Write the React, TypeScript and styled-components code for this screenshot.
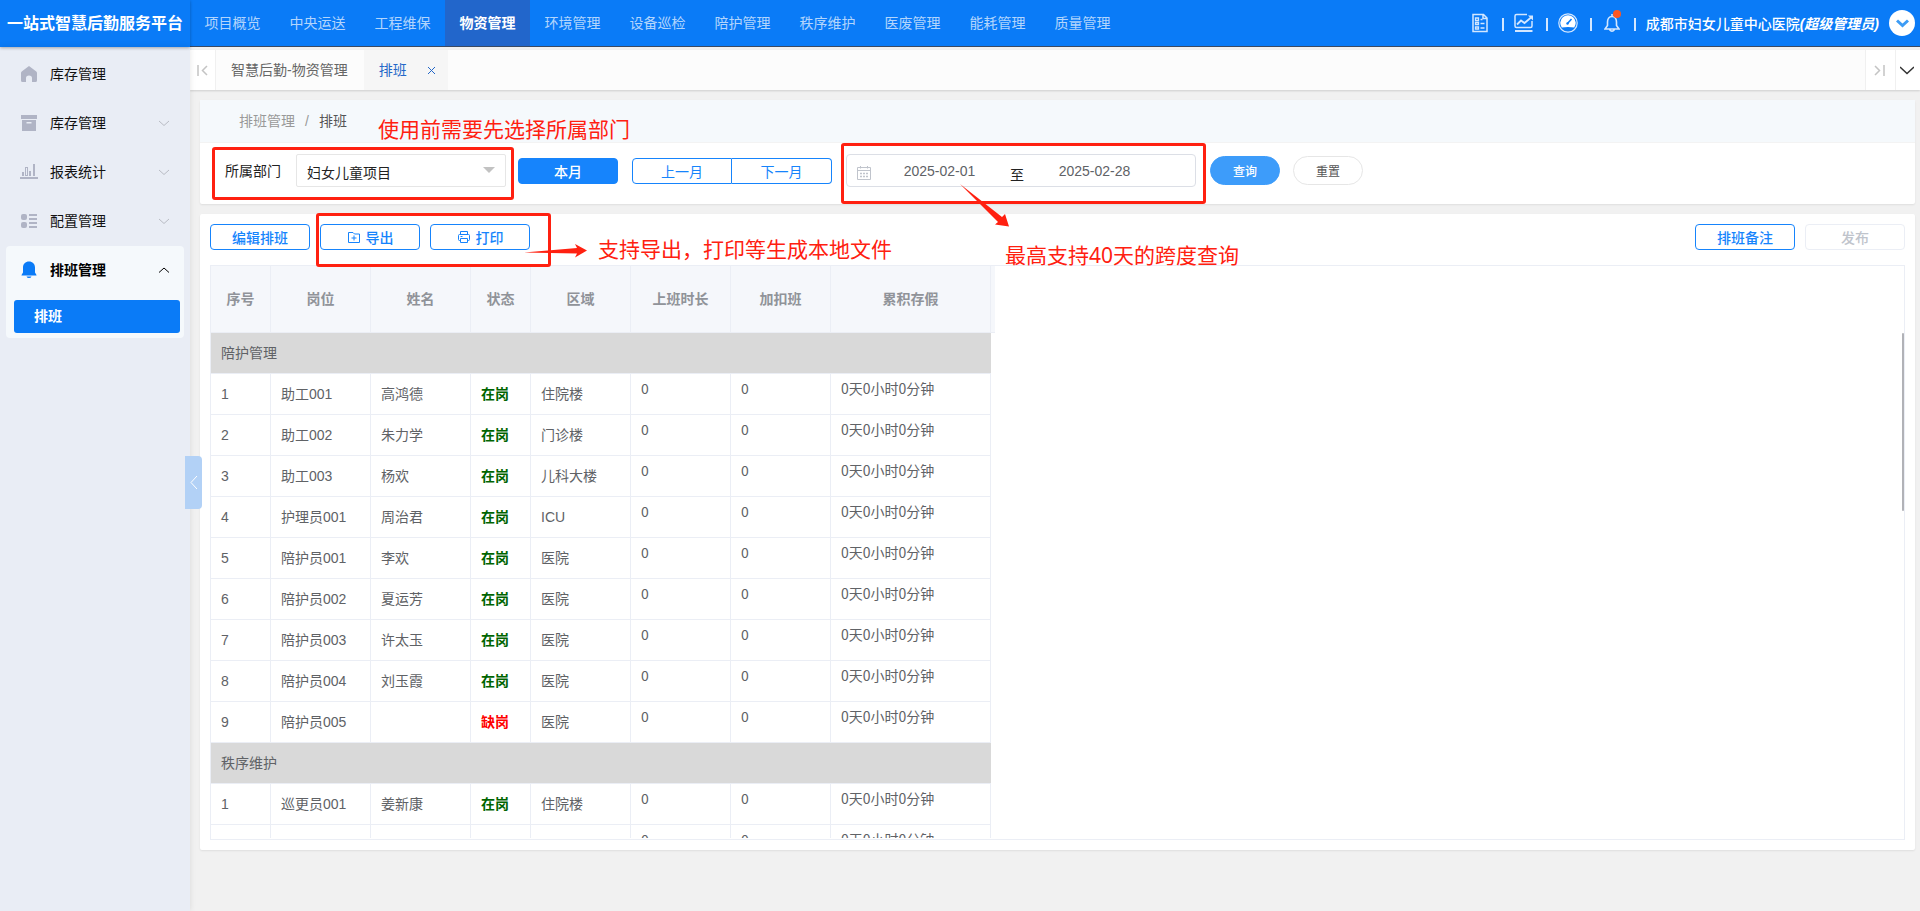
import React from "react";
import styled, { createGlobalStyle, css } from "styled-components";

const sans = `"Liberation Sans", "Noto Sans CJK SC", sans-serif`;
const cjk = `"Noto Sans CJK SC", sans-serif`;

const Global = createGlobalStyle`
  * { box-sizing: border-box; }
  body { margin: 0; background: #f1f1f1; font: 14px/20px ${sans}; color: #333; }
  button, input, select { font: inherit; margin: 0; }
  a { color: inherit; text-decoration: none; }
  svg { display: block; flex: none; }
`;

const Page = styled.div`
  position: relative;
  min-height: 100vh;
  display: flex;
  flex-direction: column;
  overflow: hidden;
`;

/* ---------- header ---------- */
const Header = styled.header`
  display: flex;
  height: 47px;
  background: #0a7bf7;
  color: #fff;
`;
const Brand = styled.h1`
  width: 190px;
  margin: 0;
  flex: none;
  text-align: center;
  font: 700 16px/44px ${cjk};
  box-shadow: 0 1px 3px rgba(0, 0, 0, 0.3);
  z-index: 1;
`;
const HeaderBar = styled.div`
  display: flex;
  flex: 1;
  justify-content: space-between;
  border-bottom: 1px solid #3a4a63;
`;
const Nav = styled.nav`
  display: flex;
`;
const NavLink = styled.a<{ $active?: boolean }>`
  width: 85px;
  text-align: center;
  line-height: 46px;
  color: rgba(255, 255, 255, 0.7);
  ${(p) =>
    p.$active &&
    css`
      color: #fff;
      font-weight: 700;
      background: #2266cb;
    `}
`;
const Tools = styled.div`
  display: flex;
  align-items: center;
  padding-right: 5px;
`;
const ToolButton = styled.button`
  position: relative;
  display: flex;
  align-items: center;
  justify-content: center;
  width: 42px;
  height: 46px;
  padding: 0 2px 0 0;
  border: 0;
  background: none;
  color: #d3e7ff;
`;
const Divider = styled.span`
  width: 2px;
  height: 13px;
  margin-top: 3px;
  background: #d3e7ff;
`;
const Dot = styled.span`
  position: absolute;
  top: 10px;
  right: 13px;
  width: 8px;
  height: 8px;
  border-radius: 50%;
  background: #ff5722;
`;
const Account = styled.span`
  padding: 2px 10px 0;
  font-weight: 500;
  em {
    font-weight: 700;
  }
`;
const Round = styled.button`
  display: flex;
  align-items: center;
  justify-content: center;
  width: 26px;
  height: 26px;
  padding: 0;
  border: 0;
  border-radius: 50%;
  background: #fff;
  color: #3d9cf5;
`;

/* ---------- sidebar ---------- */
const Body = styled.div`
  display: flex;
  flex: 1;
`;
const Sidebar = styled.aside`
  position: relative;
  width: 190px;
  flex: none;
  padding: 3px 6px;
  background: #e9edf5;
  box-shadow: 0 0 6px rgba(0, 0, 0, 0.1);
`;
const MenuItem = styled.a<{ $open?: boolean }>`
  display: flex;
  align-items: center;
  gap: 12px;
  height: 49px;
  padding: 0 14px 2px;
  color: ${(p) => (p.$open ? "#000" : "#111")};
  font-weight: ${(p) => (p.$open ? 700 : 400)};
  span {
    flex: 1;
  }
`;
const Group = styled.div`
  padding-bottom: 5px;
  border-radius: 4px;
  background: #f5f9fc;
`;
const SubItem = styled.a`
  display: block;
  margin: 5px 4px 0 8px;
  padding-left: 20px;
  border-radius: 3px;
  background: #0a7bf7;
  color: #fff;
  font-weight: 700;
  line-height: 33px;
`;
const Handle = styled.button`
  position: absolute;
  top: 409px;
  left: 185px;
  width: 17px;
  height: 53px;
  padding: 0;
  border: 0;
  border-radius: 0 4px 4px 0;
  background: #b2d1f6;
  color: #fff;
  display: flex;
  align-items: center;
  justify-content: center;
  z-index: 2;
`;

/* ---------- main ---------- */
const Main = styled.main`
  flex: 1;
  min-width: 0;
  padding-top: 3px;
`;
const TabBar = styled.div`
  display: flex;
  height: 40px;
  background: #fcfcfc;
  box-shadow: 0 1px 2px rgba(0, 0, 0, 0.15);
`;
const TabArrow = styled.button<{ $w: number; $dark?: boolean; $left?: boolean }>`
  display: flex;
  align-items: center;
  justify-content: center;
  width: ${(p) => p.$w}px;
  padding: 0 ${(p) => (p.$left ? 0 : 2)}px 0 0;
  border: solid #f0f0f0;
  border-width: ${(p) => (p.$left ? "0 1px 0 0" : "0 0 0 1px")};
  background: #fff;
  color: ${(p) => (p.$dark ? "#333" : "#c4c4c4")};
`;
const Tabs = styled.div`
  display: flex;
  flex: 1;
`;
const Tab = styled.a<{ $active?: boolean }>`
  display: flex;
  align-items: center;
  gap: 20px;
  padding: 0 ${(p) => (p.$active ? 12 : 16)}px 0 15px;
  color: ${(p) => (p.$active ? "#2468c8" : "#666")};
  background: ${(p) => (p.$active ? "#f6f6f6" : "transparent")};
`;
const Content = styled.div`
  display: flex;
  flex-direction: column;
  gap: 10px;
  padding: 10px 5px 10px 10px;
`;
const Card = styled.section`
  border-radius: 2px;
  background: #fff;
  box-shadow: 0 1px 2px rgba(0, 0, 0, 0.08);
`;
const Crumbs = styled.nav`
  display: flex;
  gap: 10px;
  height: 43px;
  padding: 0 39px;
  border-bottom: 1px solid #f3f3f3;
  background: #f5f9fc;
  line-height: 42px;
  color: #999;
  b {
    font-weight: 400;
    color: #555;
  }
`;
const Filters = styled.form`
  display: flex;
  align-items: center;
  height: 61px;
  padding: 0 25px 6px;
`;
const Label = styled.label`
  width: 71px;
  color: #222;
`;
const SelectBox = styled.div`
  position: relative;
  width: 210px;
  margin-right: 12px;
`;
const Select = styled.select`
  appearance: none;
  display: block;
  width: 100%;
  height: 33px;
  padding: 5px 30px 0 10px;
  border: 1px solid #e6e6e6;
  border-radius: 2px;
  background: #fff;
  color: #222;
`;
const Caret = styled.span`
  position: absolute;
  top: 13px;
  right: 11px;
  border: solid transparent;
  border-width: 6px 6px 0;
  border-top-color: #c2c2c2;
`;
const Button = styled.button<{ $kind?: "primary" | "muted" }>`
  display: flex;
  align-items: center;
  justify-content: center;
  gap: 5px;
  width: 100px;
  height: 26px;
  padding: 0;
  border: 1px solid #1684fc;
  border-radius: 4px;
  background: #fff;
  color: #1684fc;
  font-weight: 500;
  font-family: ${cjk};
  ${(p) =>
    p.$kind === "primary" &&
    css`
      background: #1684fc;
      color: #fff;
    `}
  ${(p) =>
    p.$kind === "muted" &&
    css`
      border-color: #ebeef5;
      color: #c0c4cc;
    `}
`;
const Joined = styled.div`
  display: flex;
  margin: 0 14px;
  ${Button} {
    font-weight: 400;
  }
  ${Button}:first-child {
    border-radius: 4px 0 0 4px;
  }
  ${Button}:last-child {
    border-left: 0;
    border-radius: 0 4px 4px 0;
  }
`;
const Range = styled.div`
  display: flex;
  align-items: center;
  width: 350px;
  height: 33px;
  margin-right: 14px;
  padding: 0 10px;
  border: 1px solid #dcdfe6;
  border-radius: 4px;
  svg {
    margin-top: 5px;
  }
`;
const DateInput = styled.input`
  width: 137px;
  padding: 0;
  border: 0;
  background: none;
  text-align: center;
  color: #606266;
`;
const To = styled.span`
  width: 18px;
  padding-top: 8px;
  text-align: center;
  color: #222;
`;
const Pill = styled.button<{ $plain?: boolean }>`
  width: 70px;
  height: 29px;
  margin-right: 13px;
  padding: 0;
  border: 1px solid ${(p) => (p.$plain ? "#e6e6e6" : "#3d9cfa")};
  border-radius: 15px;
  background: ${(p) => (p.$plain ? "#fff" : "#3d9cfa")};
  color: ${(p) => (p.$plain ? "#555" : "#fff")};
  font-family: ${cjk};
  font-size: 12px;
  font-weight: ${(p) => (p.$plain ? 400 : 500)};
`;
const Panel = styled(Card)`
  padding: 10px;
`;
const Toolbar = styled.div`
  display: flex;
  gap: 10px;
  margin-bottom: 15px;
`;
const Spacer = styled.span`
  flex: 1;
`;
const TableWrap = styled.div`
  position: relative;
  height: calc(100vh - 336px);
  padding-bottom: 1px;
  border: 1px solid #ebeef5;
`;
const Viewport = styled.div`
  height: 100%;
  overflow: hidden;
`;
const Thumb = styled.span`
  position: absolute;
  top: 67px;
  right: 0;
  width: 2px;
  height: 178px;
  border-radius: 1px;
  background: #b1b2b7;
`;
const Table = styled.table`
  width: 784px;
  table-layout: fixed;
  border-spacing: 0;
  color: #606266;
`;
const Th = styled.th`
  height: 67px;
  padding: 0;
  border: solid #ebeef5;
  border-width: 0 1px 1px 0;
  background: #f5f7fb;
  color: #909399;
  font-weight: 700;
  &:last-child {
    border-right: 0;
  }
`;
const Td = styled.td<{ $top?: boolean }>`
  height: 41px;
  padding: ${(p) => (p.$top ? "4px 10px 0" : "0 10px")};
  border: solid #ebeef5;
  border-width: 0 1px 1px 0;
  vertical-align: ${(p) => (p.$top ? "top" : "middle")};
  ${(p) => p.$top && `font-family: ${cjk};`}
`;
const GroupCell = styled.td`
  height: 41px;
  padding: 0 10px;
  border-bottom: 1px solid #ebeef5;
  background: #d9d9d9;
`;
const Status = styled.strong<{ $absent?: boolean }>`
  color: ${(p) => (p.$absent ? "#f00" : "#006400")};
`;

/* ---------- red guide marks over the page ---------- */
const Mark = styled.span<{ $x: number; $y: number; $w: number; $h: number }>`
  position: absolute;
  left: ${(p) => p.$x}px;
  top: ${(p) => p.$y}px;
  width: ${(p) => p.$w}px;
  height: ${(p) => p.$h}px;
  border: 3px solid #ff2010;
  border-radius: 3px;
  pointer-events: none;
`;
const Note = styled.p<{ $x: number; $y: number }>`
  position: absolute;
  left: ${(p) => p.$x}px;
  top: ${(p) => p.$y}px;
  margin: 0;
  font-family: "Noto Sans", ${cjk};
  font-size: 21px;
  line-height: 30px;
  white-space: nowrap;
  color: #ff2010;
`;
const Arrow = styled.svg<{ $x: number; $y: number }>`
  position: absolute;
  left: ${(p) => p.$x}px;
  top: ${(p) => p.$y}px;
  fill: #ff2010;
  pointer-events: none;
`;

const Chevron = ({ d, w = 12, h = 8, sw = 1 }: { d: string; w?: number; h?: number; sw?: number }) => (
  <svg width={w} height={h} viewBox={`0 0 ${w} ${h}`} fill="none" stroke="currentColor" strokeWidth={sw}>
    <path d={d} />
  </svg>
);

const HomeIcon = () => (
  <svg width="18" height="18" viewBox="0 0 18 18" fill="#b0b4c5">
    <path d="M9 1 16.300 6.500Q17 7 17 8V15.500Q17 17 15.500 17H12V13Q12 10.500 9 10.500T6 13V17H2.500Q1 17 1 15.500V8Q1 7 1.700 6.500Z" />
  </svg>
);
const BoxIcon = () => (
  <svg width="18" height="18" viewBox="0 0 18 18" fill="#b0b4c5">
    <rect x="1" y="1" width="16" height="4" />
    <path d="M2 6H16V17H2ZM6.500 8V9.500H11.500V8Z" fillRule="evenodd" />
  </svg>
);
const ChartIcon = () => (
  <svg width="18" height="18" viewBox="0 0 18 18" fill="#b0b4c5">
    <path d="M0 14H18V16H0ZM2 9H4V13H2ZM9 8H11V13H9ZM13 1H15V13H13Z" />
    <rect x="5.500" y="4.500" width="2" height="8" fill="none" stroke="#b0b4c5" />
  </svg>
);
const ListIcon = () => (
  <svg width="18" height="18" viewBox="0 0 18 18" fill="#b0b4c5">
    <rect x="1" y="2" width="6" height="6" rx="2" />
    <rect x="1" y="10" width="6" height="6" rx="2" />
    <path d="M9 2H17V4H9ZM9 6H17V8H9ZM9 10H17V12H9ZM9 14H17V16H9Z" />
  </svg>
);
const BellFilled = () => (
  <svg width="18" height="18" viewBox="0 0 18 18" fill="#0a7bf7">
    <path d="M9 0.500C12.500 .5 15 3 15 6.500V11.500L16.500 14V14.500H1.500V14L3 11.500V6.500C3 3 5.500 .5 9 .5ZM6.500 15.500H11.500Q11 17 9 17T6.500 15.500Z" />
  </svg>
);

const menu = [
  { text: "库存管理", icon: <HomeIcon />, leaf: true },
  { text: "库存管理", icon: <BoxIcon /> },
  { text: "报表统计", icon: <ChartIcon /> },
  { text: "配置管理", icon: <ListIcon /> },
];

const navItems = [
  "项目概览", "中央运送", "工程维保", "物资管理", "环境管理", "设备巡检",
  "陪护管理", "秩序维护", "医废管理", "能耗管理", "质量管理",
];

const columns: [string, number][] = [
  ["序号", 60], ["岗位", 100], ["姓名", 100], ["状态", 60],
  ["区域", 100], ["上班时长", 100], ["加扣班", 100], ["累积存假", 160],
];

type Person = { post: string; name: string; area: string; absent?: boolean };
const groups: { title: string; people: Person[] }[] = [
  {
    title: "陪护管理",
    people: [
      { post: "助工001", name: "高鸿德", area: "住院楼" },
      { post: "助工002", name: "朱力学", area: "门诊楼" },
      { post: "助工003", name: "杨欢", area: "儿科大楼" },
      { post: "护理员001", name: "周治君", area: "ICU" },
      { post: "陪护员001", name: "李欢", area: "医院" },
      { post: "陪护员002", name: "夏运芳", area: "医院" },
      { post: "陪护员003", name: "许太玉", area: "医院" },
      { post: "陪护员004", name: "刘玉霞", area: "医院" },
      { post: "陪护员005", name: "", area: "医院", absent: true },
    ],
  },
  {
    title: "秩序维护",
    people: [{ post: "巡更员001", name: "姜新康", area: "住院楼" }],
  },
];

export default function App() {
  return (
    <Page>
      <Global />
      <Header>
        <Brand>一站式智慧后勤服务平台</Brand>
        <HeaderBar>
          <Nav>
            {navItems.map((t) => (
              <NavLink key={t} href="#" $active={t === "物资管理"}>{t}</NavLink>
            ))}
          </Nav>
          <Tools>
            <ToolButton aria-label="文档">
              <svg width="16" height="20" viewBox="0 0 16 20" fill="none" stroke="currentColor" strokeWidth="1.500">
                <path d="M1 1.500H11.500L15 5V18.500H1ZM11 1.500V5.500H15" />
                <path d="M3.500 5H6.500V7.500H3.500ZM3.500 9.500H6.500V11.500H3.500ZM3.500 14H6.500V16H3.500ZM8.500 6.500H10.500M8.500 10.500H12.500M8.500 15H12.500" strokeWidth="1.300" />
              </svg>
            </ToolButton>
            <Divider />
            <ToolButton aria-label="趋势">
              <svg width="20" height="20" viewBox="0 0 20 20" fill="none" stroke="currentColor" strokeWidth="1.500">
                <path d="M13 1.500H2.500Q1 1.500 1 3V13Q1 14.500 2.500 14.500H16.500Q18 14.500 18 13V8" />
                <path d="M3 11.500 7 7.500 10.500 10 17 4.500" strokeWidth="1.800" />
                <path d="M14 2.500H19V7.500Z" fill="currentColor" stroke="none" />
                <path d="M1 18H18.500" strokeWidth="2" />
              </svg>
            </ToolButton>
            <Divider />
            <ToolButton aria-label="仪表盘">
              <svg width="20" height="20" viewBox="0 0 20 20">
                <circle cx="10" cy="10" r="9.200" fill="none" stroke="currentColor" strokeWidth="1.200" />
                <path d="M3.800 14.500A7.700 7.700 0 1 1 16.200 14.500Q10 13.500 3.800 14.500Z" fill="#fff" />
                <path d="M9.500 10.500 13.500 6" stroke="#0a7bf7" strokeWidth="1.500" />
                <circle cx="9.500" cy="10.500" r="1.200" fill="#0a7bf7" />
              </svg>
            </ToolButton>
            <Divider />
            <ToolButton aria-label="通知">
              <svg width="16" height="20" viewBox="0 0 16 20" fill="none" stroke="currentColor" strokeWidth="1.600">
                <path d="M8 3.500C5 3.500 3.500 6 3.500 9V12.500L1 16H15L12.500 12.500V9C12.500 6 11 3.500 8 3.500ZM8 1V3.500M5.500 16.500Q8 20 10.500 16.500" />
              </svg>
              <Dot />
            </ToolButton>
            <Divider />
            <Account>
              成都市妇女儿童中心医院<em>(超级管理员)</em>
            </Account>
            <Round aria-label="账户菜单">
              <Chevron d="M1 1.500 6.500 6.500 12 1.500" w={13} h={9} sw={3} />
            </Round>
          </Tools>
        </HeaderBar>
      </Header>

      <Body>
        <Sidebar>
          {menu.map((m, i) => (
            <MenuItem key={i} href="#">
              {m.icon}
              <span>{m.text}</span>
              {!m.leaf && (
                <svg width="12" height="8" viewBox="0 0 12 8" fill="none" stroke="#b9bcc4">
                  <path d="M1 2 6 6.500 11 2" />
                </svg>
              )}
            </MenuItem>
          ))}
          <Group>
            <MenuItem href="#" $open>
              <BellFilled />
              <span>排班管理</span>
              <Chevron d="M1 6.500 6 2 11 6.500" />
            </MenuItem>
            <SubItem href="#">排班</SubItem>
          </Group>
          <Handle aria-label="收起菜单">
            <Chevron d="M8 1 2 7.500 8 14" w={10} h={15} />
          </Handle>
        </Sidebar>

        <Main>
          <TabBar>
            <TabArrow $w={26} $left aria-label="第一页">
              <Chevron d="M1 0V11M10 1 5.500 5.500 10 10" w={11} h={11} sw={1.5} />
            </TabArrow>
            <Tabs>
              <Tab href="#">智慧后勤-物资管理</Tab>
              <Tab href="#" $active>
                排班
                <Chevron d="M1 1 8 8M8 1 1 8" w={9} h={9} />
              </Tab>
            </Tabs>
            <TabArrow $w={30} aria-label="最后一页">
              <Chevron d="M10 0V11M1 1 5.500 5.500 1 10" w={11} h={11} sw={1.5} />
            </TabArrow>
            <TabArrow $w={25} $dark aria-label="更多">
              <Chevron d="M0 1 7 7.500 14 1" w={14} h={9} sw={1.5} />
            </TabArrow>
          </TabBar>

          <Content>
            <Card>
              <Crumbs>
                <a href="#">排班管理</a>
                <span>/</span>
                <b>排班</b>
              </Crumbs>
              <Filters>
                <Label htmlFor="dept">所属部门</Label>
                <SelectBox>
                  <Select id="dept" defaultValue="妇女儿童项目">
                    <option>妇女儿童项目</option>
                  </Select>
                  <Caret />
                </SelectBox>
                <Button type="button" $kind="primary">本月</Button>
                <Joined>
                  <Button type="button">上一月</Button>
                  <Button type="button">下一月</Button>
                </Joined>
                <Range>
                  <svg width="14" height="14" viewBox="0 0 14 14" fill="none" stroke="#c0c4cc">
                    <path d="M.5 1.500H13.500V13.500H.5ZM.5 4.500H13.500M3.500 0V2.500M10.500 0V2.500" />
                    <path d="M3 7.500H11M3 10.500H11" strokeWidth="1.500" strokeDasharray="2 1" />
                  </svg>
                  <DateInput aria-label="开始日期" defaultValue="2025-02-01" />
                  <To>至</To>
                  <DateInput aria-label="结束日期" defaultValue="2025-02-28" />
                </Range>
                <Pill type="button">查询</Pill>
                <Pill type="button" $plain>重置</Pill>
              </Filters>
            </Card>

            <Panel>
              <Toolbar>
                <Button type="button">编辑排班</Button>
                <Button type="button">
                  <svg width="14" height="14" viewBox="0 0 14 14" fill="none" stroke="currentColor">
                    <path d="M1.500 2.500H6L7.500 4H12.500V12.500H1.500ZM4.500 8H9.500M7 5.500V10.500" />
                  </svg>
                  导出
                </Button>
                <Button type="button">
                  <svg width="14" height="14" viewBox="0 0 14 14" fill="none" stroke="currentColor">
                    <path d="M3.500 4.500V1.500H10.500V4.500M3.500 10.500H2.500Q1.500 10.500 1.500 9.500V5.500Q1.500 4.500 2.500 4.500H11.500Q12.500 4.500 12.500 5.500V9.500Q12.500 10.500 11.500 10.500H10.500M3.500 8.500H10.500V12.500H3.500ZM3.500 6.500H5.500" />
                  </svg>
                  打印
                </Button>
                <Spacer />
                <Button type="button">排班备注</Button>
                <Button type="button" $kind="muted" disabled>发布</Button>
              </Toolbar>
              <TableWrap>
                <Viewport>
                  <Table>
                    <colgroup>
                      {columns.map(([t, w]) => (
                        <col key={t} width={w} />
                      ))}
                      <col width={4} />
                    </colgroup>
                    <thead>
                      <tr>
                        {columns.map(([t]) => (
                          <Th key={t} scope="col">{t}</Th>
                        ))}
                        <Th aria-hidden="true" />
                      </tr>
                    </thead>
                    <tbody>
                      {groups.map((g) => (
                        <React.Fragment key={g.title}>
                          <tr>
                            <GroupCell colSpan={8}>{g.title}</GroupCell>
                          </tr>
                          {g.people.map((p, i) => (
                            <tr key={p.post}>
                              <Td>{i + 1}</Td>
                              <Td>{p.post}</Td>
                              <Td>{p.name}</Td>
                              <Td>
                                <Status $absent={p.absent}>{p.absent ? "缺岗" : "在岗"}</Status>
                              </Td>
                              <Td>{p.area}</Td>
                              <Td $top>0</Td>
                              <Td $top>0</Td>
                              <Td $top>0天0小时0分钟</Td>
                            </tr>
                          ))}
                        </React.Fragment>
                      ))}
                      <tr>
                        <Td /><Td /><Td /><Td /><Td />
                        <Td $top>0</Td>
                        <Td $top>0</Td>
                        <Td $top>0天0小时0分钟</Td>
                      </tr>
                    </tbody>
                  </Table>
                </Viewport>
                <Thumb />
              </TableWrap>
            </Panel>
          </Content>
        </Main>
      </Body>

      <Mark $x={212} $y={147} $w={302} $h={53} />
      <Mark $x={316} $y={213} $w={235} $h={54} />
      <Mark $x={841} $y={143} $w={365} $h={61} />
      <Note $x={378} $y={114}>使用前需要先选择所属部门</Note>
      <Note $x={598} $y={234}>支持导出，打印等生成本地文件</Note>
      <Note $x={1005} $y={240}>最高支持40天的跨度查询</Note>
      <Arrow $x={524} $y={243} width="64" height="16" viewBox="0 0 64 16">
        <path d="M0 9.500 53 5 51 1 63 7.500 51 14.500 53 10.500Z" />
      </Arrow>
      <Arrow $x={959} $y={183} width="52" height="45" viewBox="0 0 52 45">
        <path d="M1 1 43 34 46 31 50 43.500 36 41.500 39 39Z" />
      </Arrow>
    </Page>
  );
}
